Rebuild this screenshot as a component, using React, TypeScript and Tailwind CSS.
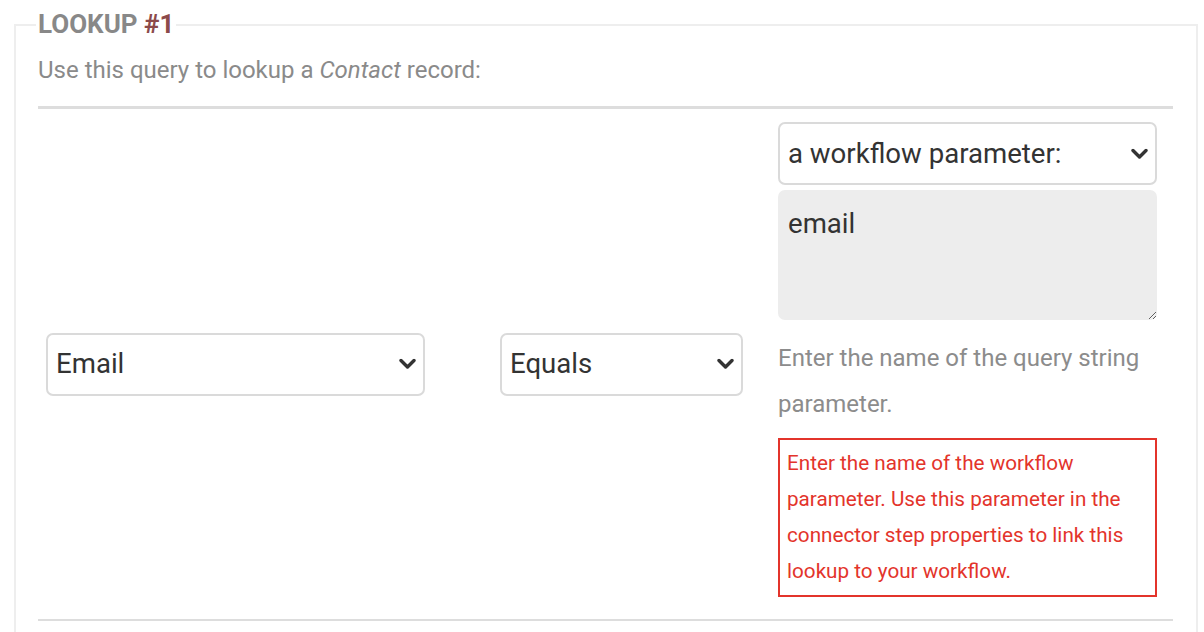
import React from "react";

function Chevron() {
  return (
    <svg
      className="pointer-events-none absolute right-[9px] top-1/2 -translate-y-1/2"
      width="17"
      height="11"
      viewBox="0 0 17 11"
      fill="none"
    >
      <polyline
        points="2,2 8.5,8.5 15,2"
        stroke="#333"
        strokeWidth="3.4"
        strokeLinecap="round"
        strokeLinejoin="round"
      />
    </svg>
  );
}

function Select({ value, options, className }: { value: string; options: string[]; className: string }) {
  return (
    <div className={"relative " + className}>
      <select
        defaultValue={value}
        className="h-[63px] w-full appearance-none rounded-[7px] border-2 border-[#dadada] bg-white pl-[8px] pr-[36px] text-[27.6px] text-[#333] outline-none"
        style={{ fontFamily: "Roboto, sans-serif" }}
      >
        {options.map((o) => (
          <option key={o}>{o}</option>
        ))}
      </select>
      <Chevron />
    </div>
  );
}

export default function App() {
  return (
    <div className="bg-white" style={{ fontFamily: "Roboto, 'Noto Sans', sans-serif" }}>
      <fieldset className="ml-[14px] mr-[6px] mt-[10px] border-2 border-[#eeeeee] pl-[22px] pr-[23px] pb-[40px]">
        <legend className="px-[2px] -ml-[2px] text-[26px] font-bold leading-[29px] text-[#888]">
          LOOKUP <span className="text-[#8c4a4a]">#1</span>
        </legend>
        <p className="mt-[16px] text-[24px] leading-[30px] text-[#8a8a8a]">
          Use this query to lookup a <i>Contact</i> record:
        </p>
        <div className="mt-[21px] flex items-center border-t-[3px] border-b-2 border-[#dddddd] py-[13px] pl-[8px]">
          <Select value="Email" options={["Email", "First Name", "Last Name"]} className="w-[379px] shrink-0" />
          <Select value="Equals" options={["Equals", "Contains"]} className="ml-[75px] w-[243px] shrink-0" />
          <div className="ml-[35px] flex w-[379px] shrink-0 flex-col pb-[9px]">
            <Select
              value="a workflow parameter:"
              options={["a workflow parameter:", "a fixed value:"]}
              className="w-full"
            />
            <textarea
              defaultValue="email"
              className="mt-[5px] h-[130px] w-full rounded-[7px] bg-[#ededed] px-[10px] pt-[16px] text-[27.6px] leading-[36px] text-[#333] outline-none"
            />
            <p className="mt-[15px] text-[24px] leading-[46px] text-[#8c8c8c]">
              Enter the name of the query string parameter.
            </p>
            <div className="mt-[11px] border-2 border-[#e3342b] px-[7px] pt-[5px] pb-[6px] text-[20.7px] leading-[36px] text-[#e3342b]">
              Enter the name of the workflow parameter. Use this parameter in the connector step properties to link
              this lookup to your workflow.
            </div>
          </div>
        </div>
      </fieldset>
    </div>
  );
}
